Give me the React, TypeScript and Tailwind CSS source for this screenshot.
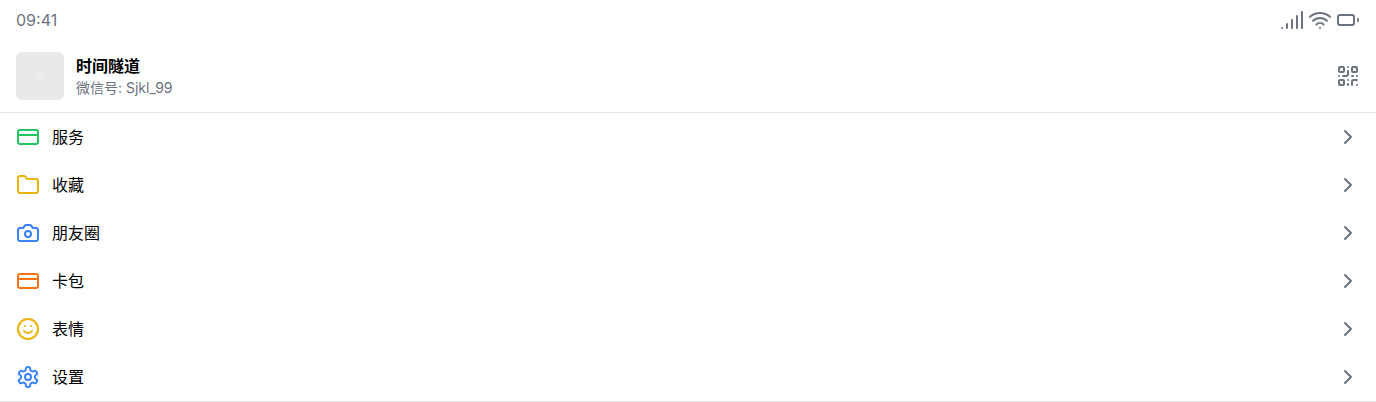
import React from "react";
import { Signal, Wifi, QrCode, CreditCard, Folder, Smile, ChevronRight } from "lucide-react";

function Battery() {
  return (
    <svg className="size-6" viewBox="0 0 24 24" fill="none" stroke="currentColor" strokeWidth="2" strokeLinecap="round" strokeLinejoin="round">
      <rect width="16" height="10" x="2" y="7" rx="2" ry="2" />
      <line x1="22" x2="22" y1="11" y2="13" />
    </svg>
  );
}

function Camera({ className }: { className?: string }) {
  return (
    <svg className={`size-6 ${className}`} viewBox="0 0 24 24" fill="none" stroke="currentColor" strokeWidth="2" strokeLinecap="round" strokeLinejoin="round">
      <path d="M14.5 4h-5L7 7H4a2 2 0 0 0-2 2v9a2 2 0 0 0 2 2h16a2 2 0 0 0 2-2V9a2 2 0 0 0-2-2h-3l-2.5-3z" />
      <circle cx="12" cy="13" r="3" />
    </svg>
  );
}

function Settings({ className }: { className?: string }) {
  return (
    <svg className={`size-6 ${className}`} viewBox="0 0 24 24" fill="none" stroke="currentColor" strokeWidth="2" strokeLinecap="round" strokeLinejoin="round">
      <path d="M12.22 2h-.44a2 2 0 0 0-2 2v.18a2 2 0 0 1-1 1.73l-.43.25a2 2 0 0 1-2 0l-.15-.08a2 2 0 0 0-2.73.73l-.22.38a2 2 0 0 0 .73 2.73l.15.1a2 2 0 0 1 1 1.72v.51a2 2 0 0 1-1 1.74l-.15.09a2 2 0 0 0-.73 2.73l.22.38a2 2 0 0 0 2.73.73l.15-.08a2 2 0 0 1 2 0l.43.25a2 2 0 0 1 1 1.73V20a2 2 0 0 0 2 2h.44a2 2 0 0 0 2-2v-.18a2 2 0 0 1 1-1.73l.43-.25a2 2 0 0 1 2 0l.15.08a2 2 0 0 0 2.73-.73l.22-.39a2 2 0 0 0-.73-2.73l-.15-.08a2 2 0 0 1-1-1.74v-.5a2 2 0 0 1 1-1.74l.15-.09a2 2 0 0 0 .73-2.73l-.22-.38a2 2 0 0 0-2.73-.73l-.15.08a2 2 0 0 1-2 0l-.43-.25a2 2 0 0 1-1-1.73V4a2 2 0 0 0-2-2z" />
      <circle cx="12" cy="12" r="3" />
    </svg>
  );
}

const rows = [
  { label: "服务", icon: CreditCard, color: "text-[#22c55e]" },
  { label: "收藏", icon: Folder, color: "text-[#eab308]" },
  { label: "朋友圈", icon: Camera, color: "text-[#3b82f6]" },
  { label: "卡包", icon: CreditCard, color: "text-[#f97316]" },
  { label: "表情", icon: Smile, color: "text-[#eab308]" },
  { label: "设置", icon: Settings, color: "text-[#3b82f6]" },
];

export default function App() {
  return (
    <div className="bg-white text-black font-['Inter','Noto_Sans_CJK_SC',sans-serif]">
      <header className="flex h-10 items-center justify-between px-4 text-[#6b7280]">
        <span>09:41</span>
        <div className="flex gap-1">
          <Signal />
          <Wifi />
          <Battery />
        </div>
      </header>
      <div className="flex h-[73px] items-center border-b border-[#e5e5e5] px-4">
        <div className="flex size-12 items-center justify-center rounded-md bg-[#e9e9e9]">
          <div className="size-2 rounded-full bg-[#eeeeee]" />
        </div>
        <div className="ml-3 flex-1">
          <div className="font-bold leading-6">时间隧道</div>
          <div className="text-sm text-[#6b7280]">微信号: Sjkl_99</div>
        </div>
        <QrCode className="text-[#6b7280]" />
      </div>
      <ul className="border-b border-[#e5e5e5]">
        {rows.map(({ label, icon: Icon, color }) => (
          <li key={label} className="flex h-12 items-center gap-3 px-4">
            <Icon className={color} />
            <span className="flex-1">{label}</span>
            <ChevronRight className="text-[#6b7280]" />
          </li>
        ))}
      </ul>
    </div>
  );
}
